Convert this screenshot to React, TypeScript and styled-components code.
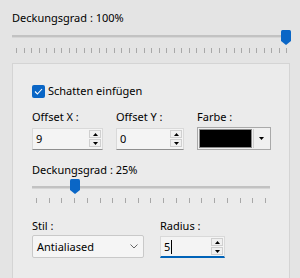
import styled, { createGlobalStyle } from "styled-components";

const GlobalStyle = createGlobalStyle`
  html, body {
    margin: 0;
    padding: 0;
    height: 100%;
    overflow: hidden;
    background: #e4e4e4;
  }
  body {
    font-family: "Noto Sans", "Segoe UI", sans-serif;
    font-size: 11px;
    color: #000;
  }
`;

const Page = styled.div`
  padding: 10px 9px 0 12px;
`;

const Label = styled.div`
  font-size: 11px;
  line-height: 16px;
  height: 16px;
  white-space: nowrap;
`;

// slider
const SliderBox = styled.div<{ $width: number; $mt: number }>`
  position: relative;
  width: ${(p) => p.$width}px;
  height: 15px;
  margin-top: ${(p) => p.$mt}px;
`;

const Track = styled.div<{ $top: number }>`
  position: absolute;
  left: 0;
  right: 0;
  top: ${(p) => p.$top}px;
  height: 2px;
  background: #c2c2c2;
  border-bottom: 1px solid #d6d6d6;
`;

const Thumb = styled.svg`
  position: absolute;
  top: 0;
`;

const Ticks = styled.div<{ $width: number; $mt: number }>`
  display: flex;
  justify-content: space-between;
  box-sizing: border-box;
  width: ${(p) => p.$width}px;
  padding: 0 4px;
  margin-top: ${(p) => p.$mt}px;
  height: 5px;
`;

const Tick = styled.span`
  width: 1px;
  height: 5px;
  background: #a8a8a8;
`;

function Slider({
  width,
  pos,
  ticks,
  mt,
  trackTop,
  tickGap,
}: {
  width: number;
  pos: number;
  ticks: number;
  mt: number;
  trackTop: number;
  tickGap: number;
}) {
  return (
    <>
      <SliderBox $width={width} $mt={mt}>
        <Track $top={trackTop} />
        <Thumb
          width="10"
          height="15"
          viewBox="0 0 10 15"
          style={{ left: Math.round(pos * (width - 10)) }}
        >
          <path d="M1.5 0H8.5Q10 0 10 1.5V11L5 15L0 11V1.5Q0 0 1.5 0Z" fill="#0a66c6" />
        </Thumb>
      </SliderBox>
      <Ticks $width={width} $mt={tickGap}>
        {Array.from({ length: ticks }).map((_, i) => (
          <Tick key={i} />
        ))}
      </Ticks>
    </>
  );
}

// group panel
const Panel = styled.div`
  box-sizing: border-box;
  width: 278px;
  margin-top: 10px;
  padding: 19px 19px 40px 19px;
  background: #ebebeb;
  border: 1px solid #d4d4d4;
`;

const CheckRow = styled.div`
  display: flex;
  align-items: center;
  gap: 3px;
  height: 16px;
  line-height: 16px;
`;

const CheckBox = styled.span`
  display: flex;
  align-items: center;
  justify-content: center;
  width: 13px;
  height: 13px;
  border-radius: 2px;
  background: #0a66c6;
`;

const Row = styled.div<{ $mt: number; $gap: number }>`
  display: flex;
  gap: ${(p) => p.$gap}px;
  margin-top: ${(p) => p.$mt}px;
`;

const Field = styled.div<{ $gap: number }>`
  display: flex;
  flex-direction: column;
  gap: ${(p) => p.$gap}px;
`;

const SpinBox = styled.div<{ $width: number; $focus?: boolean }>`
  box-sizing: border-box;
  display: flex;
  align-items: flex-start;
  width: ${(p) => p.$width}px;
  height: 22px;
  background: #f4f4f4;
  border: 1px solid #d9d9d9;
  border-bottom: ${(p) => (p.$focus ? "2px solid #0063b8" : "1px solid #8e8e8e")};
`;

const SpinValue = styled.div`
  flex: 1;
  display: flex;
  align-items: center;
  padding-left: 3px;
  height: 19px;
  line-height: 19px;
`;

const Caret = styled.span`
  display: inline-block;
  width: 1px;
  height: 14px;
  margin-left: 1px;
  background: #000;
`;

const SpinButtons = styled.div`
  display: flex;
  flex-direction: column;
  gap: 1px;
  margin: 1px 1px 0 0;
`;

const SpinButton = styled.div`
  box-sizing: border-box;
  display: flex;
  align-items: center;
  justify-content: center;
  width: 12px;
  height: 8px;
  background: #f0f0f0;
  border: 1px solid #cfcfcf;
`;

const ColorCombo = styled.div`
  box-sizing: border-box;
  display: flex;
  width: 74px;
  height: 23px;
  padding: 1px;
  background: #f0f0f0;
  border: 1px solid #a9a9a9;
`;

const Swatch = styled.div`
  flex: 1;
  background: #000;
  border: 1px solid #8a8a8a;
  margin-right: 1px;
`;

const DropButton = styled.div`
  display: flex;
  align-items: center;
  justify-content: center;
  width: 15px;
  border-left: 1px solid #d0d0d0;
`;

const Select = styled.div`
  box-sizing: border-box;
  display: flex;
  align-items: center;
  justify-content: space-between;
  width: 112px;
  height: 23px;
  padding: 0 5px 0 4px;
  background: #f5f5f5;
  border: 1px solid #c9c9c9;
  border-radius: 2px;
`;

const Up = () => (
  <svg width="5" height="3" viewBox="0 0 5 3">
    <path d="M2.5 0L5 3H0Z" fill="#000" />
  </svg>
);

const Down = () => (
  <svg width="5" height="3" viewBox="0 0 5 3">
    <path d="M0 0H5L2.5 3Z" fill="#000" />
  </svg>
);

function Spin({ width, value, focus }: { width: number; value: string; focus?: boolean }) {
  return (
    <SpinBox $width={width} $focus={focus}>
      <SpinValue>
        {value}
        {focus && <Caret />}
      </SpinValue>
      <SpinButtons>
        <SpinButton>
          <Up />
        </SpinButton>
        <SpinButton>
          <Down />
        </SpinButton>
      </SpinButtons>
    </SpinBox>
  );
}

export default function App() {
  return (
    <>
      <GlobalStyle />
      <Page>
        <Label>Deckungsgrad : 100%</Label>
        <Slider width={279} pos={1} ticks={37} mt={4} trackTop={5} tickGap={3} />

        <Panel>
          <CheckRow>
            <CheckBox>
              <svg width="9" height="7" viewBox="0 0 9 7">
                <path d="M1 3.5L3.4 6L8 1" stroke="#fff" strokeWidth="1.1" fill="none" />
              </svg>
            </CheckBox>
            Schatten einfügen
          </CheckRow>

          <Row $mt={10} $gap={13}>
            <Field $gap={3}>
              <Label>Offset X :</Label>
              <Spin width={71} value="9" />
            </Field>
            <Field $gap={3}>
              <Label>Offset Y :</Label>
              <Spin width={68} value="0" />
            </Field>
            <Field $gap={2}>
              <Label>Farbe :</Label>
              <ColorCombo>
                <Swatch />
                <DropButton>
                  <Down />
                </DropButton>
              </ColorCombo>
            </Field>
          </Row>

          <Row $mt={12} $gap={0}>
            <Label>Deckungsgrad : 25%</Label>
          </Row>
          <Slider width={238} pos={3 / 18} ticks={19} mt={1} trackTop={7} tickGap={4} />

          <Row $mt={15} $gap={16}>
            <Field $gap={1}>
              <Label>Stil :</Label>
              <Select>
                Antialiased
                <svg width="8" height="5" viewBox="0 0 8 5">
                  <path d="M0.5 0.5L4 4L7.5 0.5" stroke="#666" strokeWidth="1" fill="none" />
                </svg>
              </Select>
            </Field>
            <Field $gap={2}>
              <Label>Radius :</Label>
              <Spin width={65} value="5" focus />
            </Field>
          </Row>
        </Panel>
      </Page>
    </>
  );
}
